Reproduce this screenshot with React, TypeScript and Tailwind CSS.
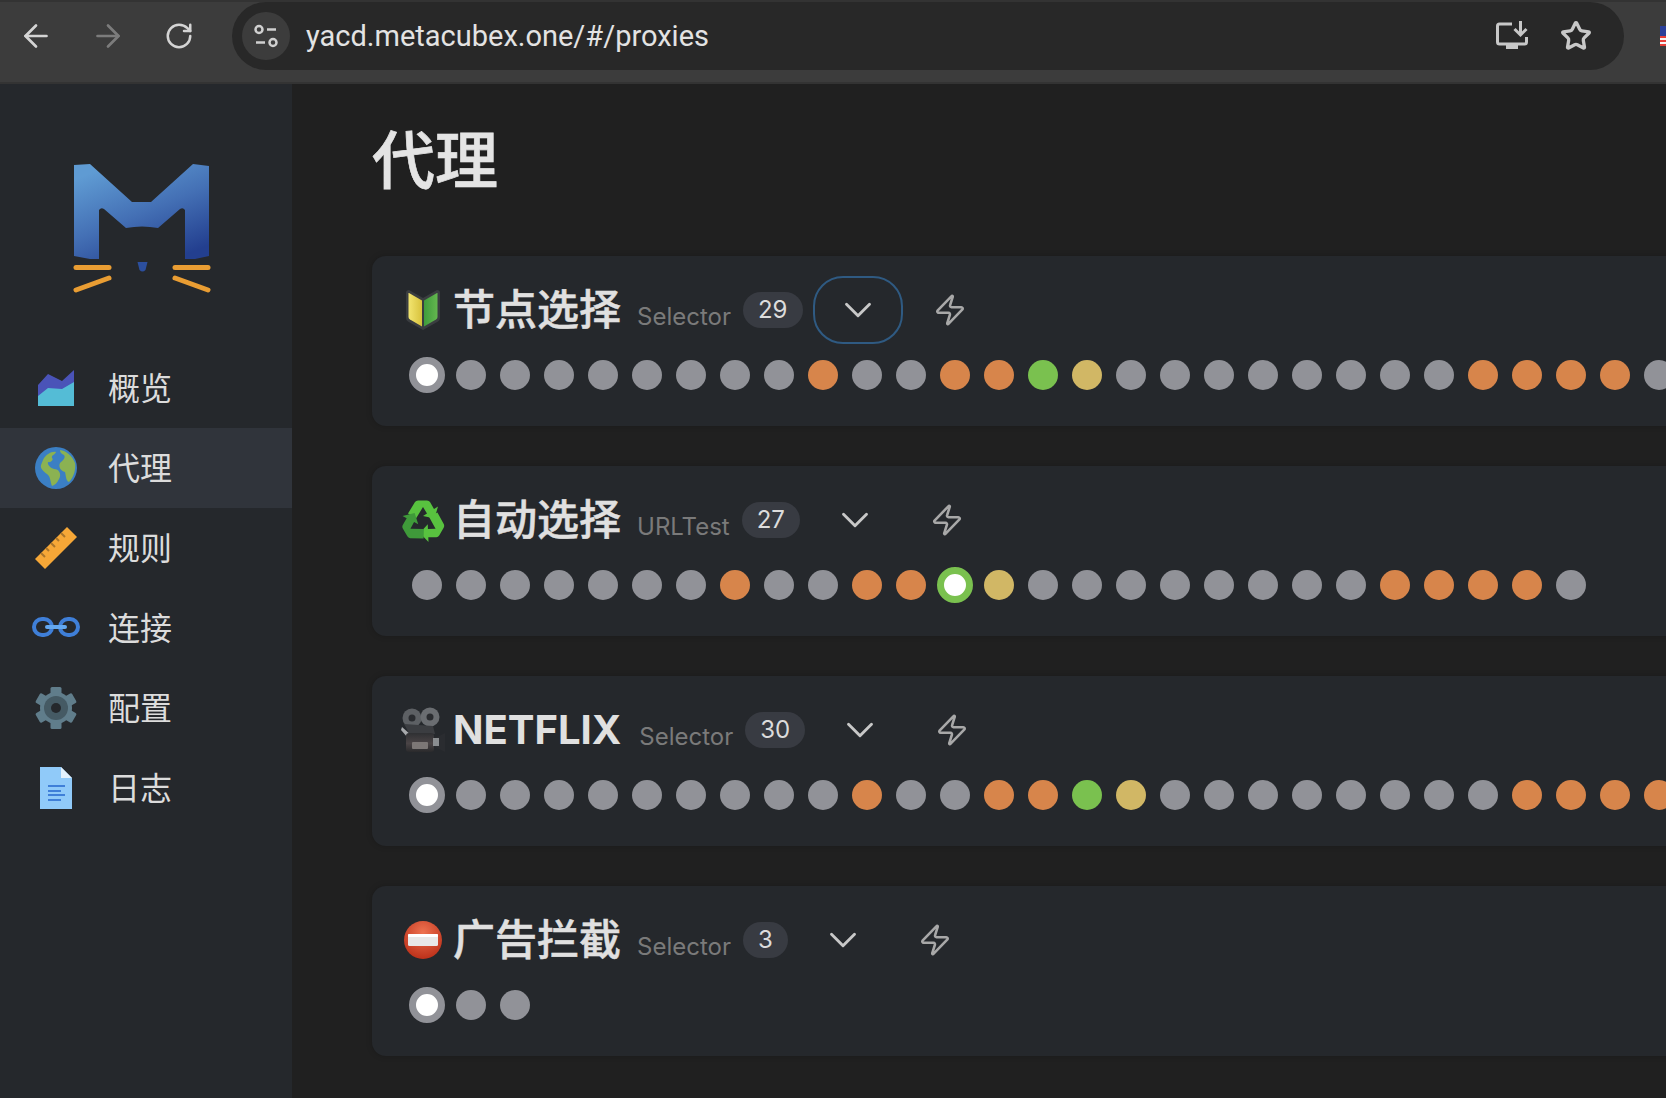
import React from 'react';
import { ArrowLeft, ArrowRight, ChevronDown, RotateCw, Star, Zap } from 'lucide-react';

const fontStack = "font-['Inter','Noto_Sans_CJK_SC',sans-serif]";

const Logo = () => (
  <svg width="160" height="160" viewBox="66 136 160 160">
    <defs>
      <linearGradient id="mGrad" x1="0.2" y1="0.05" x2="0.75" y2="1">
        <stop offset="0" stopColor="#5f9bd3" />
        <stop offset="0.5" stopColor="#4470b5" />
        <stop offset="1" stopColor="#233f8f" />
      </linearGradient>
    </defs>
    <path
      d="M74 165 L90 164 L132 202 L151 202 L193 164 L209 166 L209 256 L195 259 L185 259 L185 210 Q183 207 180 209 L158 228 Q142 225 126 228 L104 209 Q101 207 99 210 L99 259 L90 259 L74 256 Z"
      fill="url(#mGrad)"
    />
    <path d="M137.500 262 H147.500 L145.500 270 Q142.500 273 139.500 270 Z" fill="#2c4f9e" />
    <g stroke="#e99d33" strokeWidth="5" strokeLinecap="round">
      <line x1="76" y1="267.500" x2="109" y2="267.500" />
      <line x1="76" y1="290" x2="109" y2="278" />
      <line x1="175" y1="267.500" x2="208" y2="267.500" />
      <line x1="175" y1="278" x2="208" y2="290" />
    </g>
  </svg>
);

const ChartIcon = () => (
  <svg width="48" height="48" viewBox="0 0 48 48">
    <path d="M6 21 L16 10 L30 17 L42 6 V20 L30 26 L16 25 L6 33 Z" fill="#4a53b8" />
    <path d="M6 32 L16 24 L30 25 L42 18 V42 H6 Z" fill="#54bcd6" />
  </svg>
);

const GlobeIcon = () => (
  <svg width="48" height="48" viewBox="0 0 48 48">
    <circle cx="24" cy="24" r="21" fill="#3b7fc4" />
    <path
      d="M11 16 C14 10 20 7 24 8 C23 11 19 11 20 14 C22 15 19 19 16 18 C15 21 19 24 22 25 C27 25 30 30 27 35 C25 39 23 41 20 42 C18 38 19 33 15 30 C11 27 8 24 9 21 Z"
      fill="#8bb252"
    />
    <path
      d="M28 6 C34 7 40 11 43 19 C44 25 42 33 37 38 C34 37 34 32 33 28 C29 27 26 23 28 19 C31 16 34 14 32 11 C30 10 28 9 28 6 Z"
      fill="#8bb252"
    />
  </svg>
);

const RulerIcon = () => (
  <svg width="48" height="48" viewBox="0 0 48 48">
    <path d="M3 35 L35 3 L45 13 L13 45 Z" fill="#f6a737" />
    <g stroke="#a9742a" strokeWidth="2">
      <line x1="9" y1="29" x2="13" y2="33" />
      <line x1="14" y1="24" x2="17" y2="27" />
      <line x1="19" y1="19" x2="23" y2="23" />
      <line x1="24" y1="14" x2="27" y2="17" />
      <line x1="29" y1="9" x2="33" y2="13" />
    </g>
  </svg>
);

const ChainIcon = () => (
  <svg width="48" height="48" viewBox="0 0 48 48">
    <rect x="2" y="15" width="18" height="16" rx="8" fill="none" stroke="#3f7fd8" strokeWidth="4" />
    <rect x="28" y="15" width="18" height="16" rx="8" fill="none" stroke="#3f7fd8" strokeWidth="4" />
    <line x1="15" y1="23" x2="33" y2="23" stroke="#64a8f0" strokeWidth="4" strokeLinecap="round" />
  </svg>
);

const GearIcon = () => (
  <svg width="48" height="48" viewBox="0 0 48 48">
    <g fill="#607d8b">
      <circle cx="24" cy="24" r="16" />
      {[0, 60, 120, 180, 240, 300].map((a) => (
        <rect key={a} x="18.500" y="3" width="11" height="12" rx="1.500" transform={`rotate(${a} 24 24)`} />
      ))}
    </g>
    <circle cx="24" cy="24" r="12" fill="#455a64" />
    <circle cx="24" cy="24" r="5" fill="#25282c" />
  </svg>
);

const DocIcon = () => (
  <svg width="48" height="48" viewBox="0 0 48 48">
    <path d="M8 3 H29 L40 14 V45 H8 Z" fill="#90caf9" />
    <path d="M29 3 L40 14 H29 Z" fill="#e3f2fd" />
    <g fill="#3f7fd8">
      <rect x="16" y="21" width="17" height="2" />
      <rect x="16" y="26" width="13" height="2" />
      <rect x="16" y="30" width="17" height="2" />
      <rect x="16" y="35" width="13" height="2" />
    </g>
  </svg>
);

const ShieldEmoji = () => (
  <svg width="46" height="46" viewBox="0 0 46 46">
    <defs>
      <linearGradient id="shieldYellow" x1="0" y1="0" x2="1" y2="0">
        <stop offset="0" stopColor="#f2e570" />
        <stop offset="1" stopColor="#d8c23c" />
      </linearGradient>
      <linearGradient id="shieldGreen" x1="0" y1="0" x2="1" y2="0">
        <stop offset="0" stopColor="#3f9c3c" />
        <stop offset="1" stopColor="#64b84f" />
      </linearGradient>
    </defs>
    <path d="M9 3 L23 11 L37 3 Q40 3 40 6 V31 Q40 33 38 34.500 L23 43 L8 34.500 Q6 33 6 31 V6 Q6 3 9 3 Z" fill="#3a3d40" />
    <path d="M9 6 L22 13.500 V39.500 L10 32.500 Q8.500 31.500 8.500 30 V6.500 Z" fill="url(#shieldYellow)" />
    <path d="M37 6 L24 13.500 V39.500 L36 32.500 Q37.500 31.500 37.500 30 V6.500 Z" fill="url(#shieldGreen)" />
  </svg>
);

// one arrow of the recycling mark, rotated round the middle for the other two
const recycleArrow =
  'M15 5 Q16 3.500 18 3.500 H27 Q29 3.500 30 5 L34 12 L38 9.500 L34.500 21.500 L23 19 L27 16.500 L23 10 L16 21.500 L8 16.500 Z';

const RecycleEmoji = () => (
  <svg width="46" height="46" viewBox="0 0 46 46">
    <path d={recycleArrow} fill="#58c23f" />
    <path d={recycleArrow} fill="#58c23f" transform="rotate(120 23 24.500)" />
    <path d={recycleArrow} fill="#3f9a3a" transform="rotate(240 23 24.500)" />
  </svg>
);

const CameraEmoji = () => (
  <svg width="46" height="46" viewBox="0 0 46 46">
    <defs>
      <linearGradient id="camBody" x1="0" y1="0" x2="0" y2="1">
        <stop offset="0" stopColor="#2f3033" />
        <stop offset="0.55" stopColor="#4a4446" />
        <stop offset="1" stopColor="#2a2a2c" />
      </linearGradient>
    </defs>
    <circle cx="12" cy="11" r="9.500" fill="#5d6064" />
    <circle cx="30" cy="10" r="9.500" fill="#6a6d71" />
    <circle cx="12" cy="11" r="3.500" fill="#2a2c30" />
    <circle cx="30" cy="10" r="3.500" fill="#2a2c30" />
    <path d="M4 17 L33 19 L35 27 L9 26 Z" fill="#3b3d41" />
    <path d="M2 20 L11 28 L8 31 L1 23 Z" fill="#a8aaad" />
    <rect x="6" y="26" width="28" height="19" rx="3" fill="url(#camBody)" />
    <rect x="12" y="35" width="16" height="7" rx="1" fill="#7c7776" />
    <path d="M35 31 L45 26 V45 L35 40 Z" fill="#2a2c30" />
    <rect x="33" y="31" width="6" height="8" fill="#8a8d90" />
  </svg>
);

const NoEntryEmoji = () => (
  <svg width="46" height="46" viewBox="0 0 46 46">
    <defs>
      <radialGradient id="noEntry" cx="0.5" cy="0.3" r="0.75">
        <stop offset="0" stopColor="#ee7250" />
        <stop offset="1" stopColor="#b92c16" />
      </radialGradient>
    </defs>
    <circle cx="23" cy="23" r="19" fill="url(#noEntry)" />
    <rect x="8" y="17" width="30" height="12" rx="1.500" fill="#e8e8e8" />
    <rect x="8" y="17" width="30" height="3" rx="1" fill="#ffffff" />
  </svg>
);

const TuneIcon = () => (
  <svg width="28" height="28" viewBox="0 0 28 28" fill="none" stroke="#d0d0d0" strokeWidth="2.500">
    <circle cx="7" cy="7.500" r="3.500" />
    <line x1="15" y1="7.500" x2="24" y2="7.500" />
    <line x1="4" y1="20.500" x2="13" y2="20.500" />
    <circle cx="21" cy="20.500" r="3.500" />
  </svg>
);

const InstallIcon = () => (
  <svg width="32" height="30" viewBox="0 0 32 30" fill="none" stroke="#c8c8c8" strokeWidth="3">
    <path d="M16 3 H3.500 Q1.500 3 1.500 5 V21 Q1.500 23 3.500 23 H28.500 Q30.500 23 30.500 21 V16" />
    <path d="M24.500 0 V13 M18.500 8 L24.500 14 L30.500 8" />
    <rect x="10" y="24" width="12" height="4" fill="#c8c8c8" stroke="none" />
  </svg>
);

const navItems = [
  { label: '概览', icon: <ChartIcon /> },
  { label: '代理', icon: <GlobeIcon />, active: true },
  { label: '规则', icon: <RulerIcon /> },
  { label: '连接', icon: <ChainIcon /> },
  { label: '配置', icon: <GearIcon /> },
  { label: '日志', icon: <DocIcon /> },
];

// g grey, o orange, n green, y yellow
const groups = [
  { emoji: <ShieldEmoji />, name: '节点选择', type: 'Selector', count: 29, selected: 0, focused: true, dots: 'gggggggggoggoonyggggggggoooog' },
  { emoji: <RecycleEmoji />, name: '自动选择', type: 'URLTest', count: 27, selected: 12, dots: 'gggggggoggoonyggggggggoooog' },
  { emoji: <CameraEmoji />, name: 'NETFLIX', latin: true, type: 'Selector', count: 30, selected: 0, dots: 'ggggggggggoggoonyggggggggoooog' },
  { emoji: <NoEntryEmoji />, name: '广告拦截', type: 'Selector', count: 3, selected: 0, dots: 'ggg' },
];

const dotColor: Record<string, string> = {
  g: 'bg-[#919298]',
  o: 'bg-[#d7854b]',
  n: 'bg-[#7ac14f]',
  y: 'bg-[#d1b765]',
};

const Dot: React.FC<{ kind: string; selected: boolean }> = ({ kind, selected }) => (
  <div className="w-11 h-9 shrink-0 flex items-center justify-center">
    {selected ? (
      <div className={`w-9 h-9 rounded-full bg-white border-[7px] ${kind === 'n' ? 'border-[#7ac14f]' : 'border-[#919298]'}`} />
    ) : (
      <div className={`w-[30px] h-[30px] rounded-full ${dotColor[kind]}`} />
    )}
  </div>
);

const ProxyGroup: React.FC<(typeof groups)[number]> = ({ emoji, name, latin, type, count, selected, focused, dots }) => (
  <section className="h-[170px] w-[1400px] shrink-0 rounded-[14px] bg-[#25282c] pt-5 pl-[28px] shadow-[0_0_6px_rgba(0,0,0,0.2)]">
    <div className="flex items-center h-[68px]">
      <div className="w-[46px] h-[46px] flex items-center justify-center shrink-0">{emoji}</div>
      <h2
        className={`ml-[7px] leading-none text-[#e0e0e0] whitespace-nowrap ${
          latin ? 'text-[40px] font-bold' : 'text-[42px] font-medium [-webkit-text-stroke:0.5px_#e0e0e0]'
        }`}
      >
        {name}
      </h2>
      <span className={`mt-[14px] text-[24px] leading-none text-[#7a7a7a] ${latin ? 'ml-[18px]' : 'ml-4'}`}>{type}</span>
      <span className="ml-3 h-9 min-w-[43px] px-[15px] rounded-full bg-[#383b42] flex items-center justify-center text-[24px] text-[#dcdcdc]">
        {count}
      </span>
      <button
        className={`ml-[10px] w-[90px] h-[68px] rounded-[30px] flex items-center justify-center text-[#c8c8c8] border-2 ${
          focused ? 'border-[#2f5a82]' : 'border-transparent'
        }`}
      >
        <ChevronDown size={46} strokeWidth={1.5} />
      </button>
      <button className="ml-[2px] w-[90px] h-[68px] flex items-center justify-center text-[#a8a8a8]">
        <Zap size={34} strokeWidth={1.8} />
      </button>
    </div>
    <div className="flex mt-[13px] ml-[5px]">
      {dots.split('').map((d, i) => (
        <Dot key={i} kind={d} selected={i === selected} />
      ))}
    </div>
  </section>
);

export default function App() {
  return (
    <div className={`w-screen h-screen overflow-hidden flex flex-col bg-[#202020] ${fontStack}`}>
      <header className="h-[84px] shrink-0 flex bg-[#3c3c3c] border-y-2 border-[#333333] overflow-hidden">
        <div className="w-[72px] h-[68px] flex items-center justify-center text-[#d4d4d4]">
          <ArrowLeft size={36} strokeWidth={1.8} />
        </div>
        <div className="w-[72px] h-[68px] flex items-center justify-center text-[#7c7c7c]">
          <ArrowRight size={36} strokeWidth={1.8} />
        </div>
        <div className="w-[72px] h-[68px] flex items-center justify-center text-[#d4d4d4]">
          <RotateCw size={30} strokeWidth={2} />
        </div>
        <div className="ml-[17px] w-[1392px] h-[68px] shrink-0 rounded-full bg-[#282828] flex items-center pl-[10px] pr-8">
          <div className="w-12 h-12 rounded-full bg-[#3c3c3c] flex items-center justify-center">
            <TuneIcon />
          </div>
          <span className="ml-4 text-[29px] leading-none text-[#e3e3e3] font-['Roboto',sans-serif]">
            yacd.metacubex.one/#/proxies
          </span>
          <div className="ml-auto flex items-center gap-8 text-[#c8c8c8]">
            <InstallIcon />
            <Star size={32} strokeWidth={2.500} />
          </div>
        </div>
        <div className="ml-[36px] mt-[24px] w-[6px] h-5 shrink-0 flex flex-col">
          <div className="h-[10px] bg-[#2a3f9a]" />
          <div className="h-[10px] bg-[repeating-linear-gradient(#e6403a_0,#e6403a_2px,#f5f5f5_2px,#f5f5f5_4px)]" />
        </div>
      </header>
      <div className="flex-1 flex min-h-0">
        <aside className="w-[292px] shrink-0 bg-[#25282c]">
          <div className="h-[264px] flex items-center justify-center">
            <Logo />
          </div>
          <nav className="flex flex-col">
            {navItems.map((item) => (
              <div
                key={item.label}
                className={`h-20 flex items-center pl-[32px] ${item.active ? 'bg-[#30343b]' : ''}`}
              >
                <div className="w-12 h-12 shrink-0">{item.icon}</div>
                <span className="ml-7 mt-[2px] text-[32px] leading-none text-[#dcdcdc]">{item.label}</span>
              </div>
            ))}
          </nav>
        </aside>
        <main className="flex-1 min-w-0 overflow-hidden pl-[80px]">
          <h1 className="h-[172px] pt-[32px] text-[63px] leading-[88px] font-medium text-[#e4e4e4] [-webkit-text-stroke:0.7px_#e4e4e4]">
            代理
          </h1>
          <div className="flex flex-col gap-10">
            {groups.map((g) => (
              <ProxyGroup key={g.name} {...g} />
            ))}
          </div>
        </main>
      </div>
    </div>
  );
}
